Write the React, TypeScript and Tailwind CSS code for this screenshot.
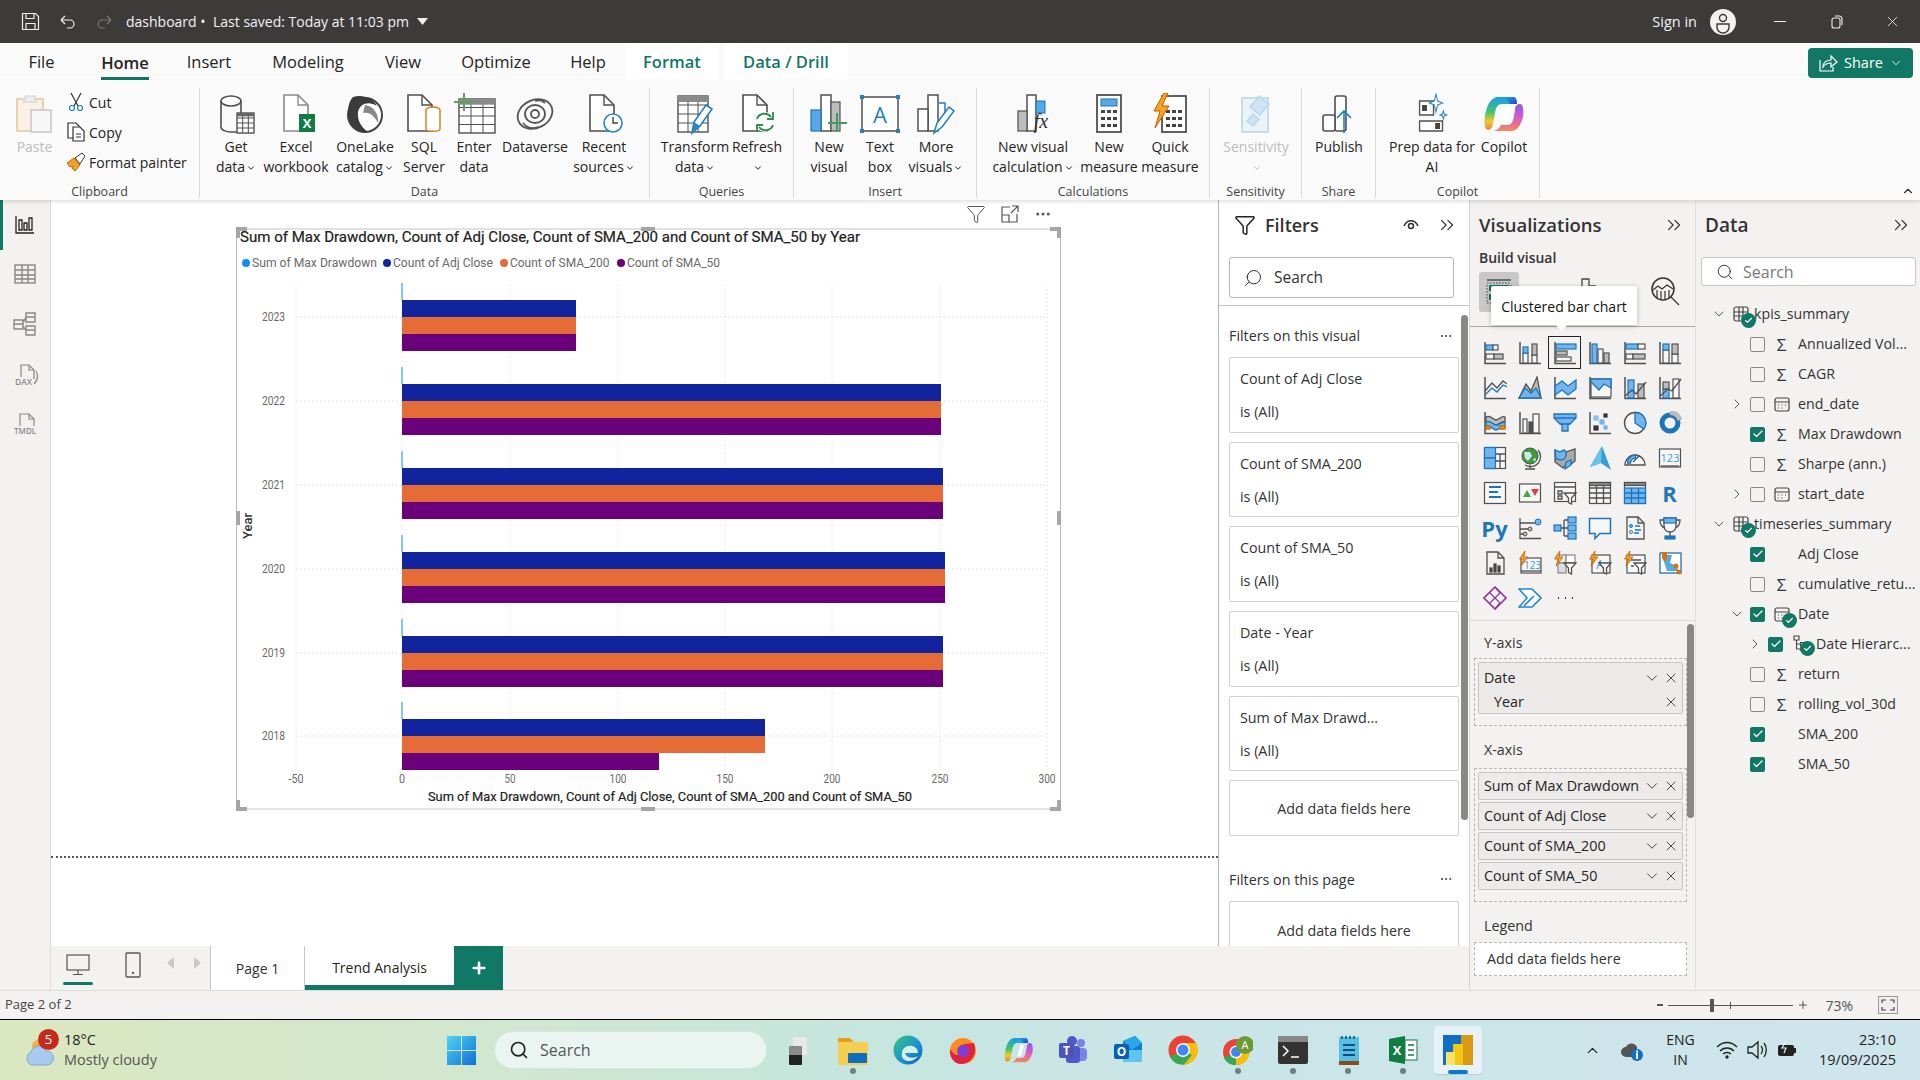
import type { ReactNode } from "react";
import {
  Check,
  ChevronDown,
  ChevronRight,
  ChevronUp,
  ChevronsRight,
  Ellipsis,
  Funnel,
  Plus,
  Search,
  X,
} from "lucide-react";

const D = "#505050";
const L = "#1b75bb";
const F = "#72b4eb";
const G = "#bdbdbd";
const W = "#f7f7f7";

const r = (x: number, y: number, w: number, h: number, f = W, s = D) => (
  <rect x={x} y={y} width={w} height={h} fill={f} stroke={s} strokeWidth="1.2" />
);
const p = (d: string, s = D, f = "none", sw = 1.3) => <path d={d} stroke={s} fill={f} strokeWidth={sw} />;
const ax = p("M2 1v21.5h21", D, "none", 1.5);
const t = (x: number, y: number, size: number, c: string, s: string, weight = 400) => (
  <text x={x} y={y} fontSize={size} fill={c} fontWeight={weight} textAnchor="middle">
    {s}
  </text>
);
const frame = r(1.5, 3, 21, 18, W, D);
const bolt = <path d="M7 0L1.5 8h4L3 15l7-9H6z" fill="#f2a51f" stroke="#c95b00" strokeWidth=".8" />;
const funnel = <path d="M11 12h12l-4.5 5v6l-3-1.5V17z" fill="#fff" stroke={D} strokeWidth="1.3" />;

// visual gallery, row by row. R and Py are plain text cells, see VizCell
const vizIcons: ReactNode[] = [
  <>{ax}{r(3, 4, 7, 5, F, L)}{r(10, 4, 5, 5)}{r(3, 13, 8, 5)}{r(11, 13, 9, 5, G)}</>,
  <>{ax}{r(5, 12, 5, 10)}{r(5, 6, 5, 6, F, L)}{r(14, 14, 5, 8)}{r(14, 3, 5, 11, G)}</>,
  <>{ax}{r(3, 3, 20, 5, F, L)}{r(3, 10, 11, 4, G)}{r(3, 16, 15, 4)}</>,
  <>{ax}{r(4, 3, 5, 19, F, L)}{r(10, 8, 5, 14)}{r(16, 12, 5, 10, G)}</>,
  <>{ax}{r(3, 3, 12, 5, F, L)}{r(15, 3, 7, 5)}{r(3, 13, 7, 5)}{r(10, 13, 12, 5, G)}</>,
  <>{ax}{r(5, 9, 6, 13)}{r(5, 3, 6, 6, F, L)}{r(14, 13, 6, 9)}{r(14, 3, 6, 10, G)}</>,
  <>{ax}{p("M2 15l7-8 5 5 6-7 4 3")}{p("M2 19l7-7 5 4 6-7 4 2", L)}</>,
  <>{p("M1 22l7-14 5 7 6-14 4 21z", D, G)}{p("M1 22l6-10 6 5 5-5 5 10z", L, F)}</>,
  <>{ax}{p("M2 10l7-5 6 5 8-6v9l-8 6-6-5-7 5z", L, F)}</>,
  <>{ax}{r(3, 3, 20, 18, W, D)}{p("M3 3h20v9l-7-4-5 6-8-8z", L, F)}</>,
  <>{ax}{r(5, 4, 6, 18, F, L)}{r(15, 8, 6, 14, G)}{p("M2 20l7-6 4 4 10-12")}</>,
  <>{ax}{r(5, 13, 6, 9, F, L)}{r(5, 6, 6, 7, G)}{r(15, 3, 6, 19)}{p("M2 20l8-7 4 2 9-12")}</>,
  <>{ax}{p("M3 6c5-3 6 3 10 3s5-5 9-3v5c-4-2-5 3-9 3s-5-5-10-3z", D, G)}{p("M3 11c5-3 6 3 10 3s5-4 9-2v4c-4-2-5 3-9 3s-5-6-10-3z", L, F)}{p("M3 15h4v3H3zM17 15h5v3h-5z", "#c96a00", "#f0a030")}</>,
  <>{ax}{r(5, 8, 4, 14)}{r(11, 11, 4, 11, D, D)}{r(15, 3, 6, 19, W)}</>,
  <>{p("M1 3h22v4L17 13h-2v7H9v-7H7L1 7z", L, F)}{p("M1 7h22M7 13h10", L)}</>,
  <>{ax}{r(6, 5, 4, 4, "#8cc0ee", "#8cc0ee")}{r(12, 9, 4, 4, F, F)}{r(6, 15, 4, 4, "#333", "#333")}{r(16, 3, 3, 3, "#333", "#333")}{r(16, 15, 3, 3, F, F)}</>,
  <><circle cx="12" cy="12" r="10.5" fill={W} stroke={D} strokeWidth="1.4" />{p("M12 1.5A10.5 10.5 0 0 1 21 18L12 12z", L, F)}</>,
  <><circle cx="12" cy="12" r="8" fill="none" stroke={L} strokeWidth="5" /><path d="M12 1.5A10.5 10.5 0 0 1 22 9" stroke={G} strokeWidth="5" fill="none" /></>,
  <>{r(1.5, 1.5, 21, 21, W, D)}{r(1.5, 1.5, 11, 10.5, F, L)}{r(1.5, 12, 11, 10.5, F, L)}{p("M12.5 8h10M17 8v14.5M12.5 15h10")}</>,
  <><circle cx="12" cy="10" r="8" fill="#3f9c3a" stroke={D} /><path d="M6 6h6l2 4-4 5-3-3zM15 13l3-1-1 4z" fill="#cfe6f5" /><path d="M20 4a10 10 0 0 1-13 15M12 19v3M7 23h10" stroke={D} fill="none" strokeWidth="1.3" /></>,
  <>{p("M2 4l5 2 4-2 2 2 9-3v12l-5 4-5 1-2 2-8-6z", D, "#a9a9a9")}{p("M2 4l5 2 4-2 2 2v4l-2 3-3 1-5-1z", L, F)}{p("M12 23l1-7 5-2v5z", L, F)}</>,
  <><path d="M14 0L23 24 13 17 2 21z" fill="#2f9fd6" /><path d="M14 0L13 17 2 21z" fill="#69c2ea" /></>,
  <>{p("M2 19a10 10 0 0 1 20 0z", D, W)}{p("M4.5 17a8 8 0 0 1 8-8v3a5 5 0 0 0-5 5z", L, F)}{p("M10 16l6-6", D)}</>,
  <>{frame}{p("M3 20h18", D)}{t(12, 16, 11, "#3a9ad9", "123")}</>,
  <>{r(1.5, 1.5, 21, 21)}{p("M6 6h12M6 11h9M6 16h12", L, "none", 2)}</>,
  <>{frame}<path d="M5 16l4-7 4 7z" fill="#46a546" /><path d="M13 8h8l-4 7z" fill="#e33f3f" /></>,
  <>{r(1.5, 1.5, 21, 19)}{p("M1.5 6h21M5 10h4v3H5zM5 15h4v3H5z")}{funnel}</>,
  <>{r(1.5, 1.5, 21, 21)}{p("M1.5 7h21M1.5 12h21M1.5 17h21M8.5 3v20M15.5 3v20")}{r(1.5, 1.5, 21, 3, "#888")}</>,
  <>{r(1.5, 1.5, 21, 21)}{r(1.5, 7, 21, 15.5, F, L)}{p("M1.5 12h21M1.5 17h21M8.5 7v15M15.5 7v15", L)}{r(1.5, 1.5, 21, 3, "#888")}</>,
  "R",
  "Py",
  <>{p("M2 2v20.5h21M2 7h17M2 13h10M2 18h5M12 13M7 18")}<circle cx="20" cy="6" r="3" fill={F} stroke={L} /><circle cx="12" cy="13" r="2" fill={G} stroke={D} /><circle cx="7" cy="18" r="2" fill={G} stroke={D} /></>,
  <>{r(1, 9, 7, 6, F, L)}{r(15, 1, 8, 6, F, L)}{r(15, 9, 8, 6, F, L)}{r(15, 17, 8, 6, F, L)}{p("M8 12h3M11 4v16M11 4h4M11 12h4M11 20h4")}</>,
  <>{p("M1.5 2.5h21v15H12l-5 5v-5H1.5z", L, W, 1.5)}</>,
  <>{p("M4 1h11l6 6v16H4z")}{p("M15 1v6h6")}<circle cx="8" cy="10" r="1.5" fill={F} stroke={L} /><circle cx="8" cy="16" r="1.5" fill="#fff" stroke={L} />{p("M12 10h5M12 14h6M11 17h5", L)}</>,
  <>{p("M6 2h12v8c0 4-3 6-6 6s-6-2-6-6z", D, W)}{r(6, 2, 12, 5, F, L)}{p("M6 4H2c0 5 2 7 5 8M18 4h4c0 5-2 7-5 8M12 16v4")}{r(7, 20, 10, 3, L, L)}</>,
  <>{p("M4 1h11l6 6v16H4z")}{p("M15 1v6h6")}{r(7, 17, 2, 4, "#444", "#444")}{r(11, 13, 2, 8, "#444", "#444")}{r(15, 15, 2, 6, "#444", "#444")}</>,
  <>{r(3, 7, 20, 15)}{p("M3 20h20")}{t(14.5, 18, 10, "#3a9ad9", "123")}{bolt}</>,
  <>{r(5, 4, 8, 8, "#eee", "#888")}{r(13, 4, 9, 8, "#fff", "#888")}{r(5, 12, 8, 10, "#ddd", "#888")}{bolt}{funnel}</>,
  <>{r(4, 4, 18, 18)}{t(12, 18, 12, "#3a9ad9", "A")}{bolt}{funnel}</>,
  <>{r(4, 4, 18, 18)}{p("M8 9h10M8 15h3")}{bolt}{funnel}</>,
  <>{r(2, 2, 21, 20, "#fff", "#1565a8")}<path d="M4 4h10l-2 8 5 2 3 4v2H9l-2-6z" fill="#5aa8e0" /><path d="M4 1h5v6l-2.5 4L4 7z" fill="#d9730d" /><circle cx="18" cy="15" r="2.5" fill="#d9730d" /><circle cx="21" cy="21" r="2.5" fill="#d9730d" /></>,
  <>{p("M12 1l11 11-11 11L1 12z", "#8a3b9e", "none", 1.6)}{p("M7 7l10 10M17 7L7 17M12 1l5 6M12 23l5-6", "#8a3b9e", "none", 1.2)}</>,
  <>{p("M1 3h13l9 9-9 9H1l8-9z", "#1f86d8", "#fff", 1.6)}{p("M6 20L16 10", "#1f86d8", "none", 1.6)}</>,
  <>{p("M5 12h1M12 12h1M19 12h1", "#333", "none", 2)}</>,
];

const VizCell = ({ n }: { n: number }) => {
  const icon = vizIcons[n];
  if (typeof icon === "string") {
    return <span className="text-[22px] leading-none font-bold text-[#1f78b9]">{icon}</span>;
  }
  return (
    <svg width="24" height="24" viewBox="0 0 24 24" fontFamily="'Open Sans',sans-serif" aria-hidden="true">
      {icon}
    </svg>
  );
};

const grid = (x: number, y: number, w: number, h: number, cols: number, rows: number, head = "#8a8a8a") => {
  const lines = [];
  for (let i = 1; i < cols; i++) lines.push(`M${x + (w * i) / cols} ${y}v${h}`);
  for (let i = 1; i < rows; i++) lines.push(`M${x} ${y + (h * i) / rows}h${w}`);
  return (
    <>
      <rect x={x} y={y} width={w} height={h} fill="#fff" stroke={D} strokeWidth="1.4" />
      <path d={lines.join("")} stroke={D} strokeWidth="1" fill="none" />
      <rect x={x} y={y} width={w} height={h / rows / 1.5} fill={head} />
    </>
  );
};
const doc = (x: number, y: number, w: number, h: number, s = D) => (
  <>
    <path d={`M${x} ${y}h${w - 10}l10 10v${h - 10}h-${w}z`} fill="#fff" stroke={s} strokeWidth="1.6" />
    <path d={`M${x + w - 10} ${y}v10h10`} fill="none" stroke={s} strokeWidth="1.4" />
  </>
);
const Rb = ({ children }: { children: ReactNode }) => (
  <svg width="44" height="42" viewBox="0 0 44 42" fontFamily="'Open Sans',sans-serif" aria-hidden="true">
    {children}
  </svg>
);

const ribbonIcons: Record<string, ReactNode> = {
  paste: (
    <>
      <rect x="4" y="6" width="26" height="32" fill="#fbf1e4" stroke="#e6c89f" strokeWidth="1.6" />
      <path d="M12 6V3h10v3l2 3H10z" fill="#eee" stroke="#cfcfcf" />
      <rect x="18" y="17" width="20" height="22" fill="#f7f7f7" stroke="#c9c9c9" strokeWidth="1.6" />
    </>
  ),
  get: (
    <>
      <ellipse cx="17" cy="8" rx="10" ry="5" fill="#fff" stroke={D} strokeWidth="1.6" />
      <path d="M7 8v26c0 3 5 5 10 5h6M27 8v12" fill="none" stroke={D} strokeWidth="1.6" />
      {grid(23, 20, 17, 20, 3, 4, "#666")}
    </>
  ),
  excel: (
    <>
      {doc(10, 2, 24, 36, "#8a8a8a")}
      <rect x="25" y="21" width="16" height="18" fill="#107c41" />
      <text x="33" y="35" fontSize="13" fontWeight="700" fill="#fff" textAnchor="middle">X</text>
    </>
  ),
  onelake: (
    <>
      <circle cx="22" cy="22" r="17" fill="#fff" stroke="#444" strokeWidth="2" />
      <path d="M10 4c8-3 20 0 24 9-8-5-17-3-19 6-1 8 3 15 10 20C14 40 5 32 5 22 5 14 6 8 10 4z" fill="#3b3b3b" />
      <path d="M22 12c8 1 14 8 13 18-4-8-9-11-15-10z" fill="#888" />
    </>
  ),
  sql: (
    <>
      {doc(6, 2, 24, 36)}
      <ellipse cx="31" cy="17" rx="7" ry="3" fill="#fff" stroke="#d97a1a" strokeWidth="1.4" />
      <path d="M24 17v19c0 3 14 3 14 0V17" fill="#fff" stroke="#d97a1a" strokeWidth="1.4" />
    </>
  ),
  enter: (
    <>
      {grid(7, 6, 36, 34, 3, 4)}
      <path d="M12 0v18M2 9h20" stroke="#5aa05a" strokeWidth="2" />
    </>
  ),
  dataverse: (
    <g fill="none" stroke="#555" strokeWidth="1.8">
      <ellipse cx="22" cy="21" rx="18" ry="14" transform="rotate(-25 22 21)" />
      <ellipse cx="22" cy="21" rx="10" ry="9" />
      <circle cx="22" cy="21" r="4" />
      <path d="M10 30c4 5 10 6 15 4M32 10c-3-3-7-3-10-2" />
    </g>
  ),
  recent: (
    <>
      {doc(8, 2, 24, 36)}
      <circle cx="31" cy="30" r="9" fill="#fff" stroke="#2a87c8" strokeWidth="1.6" />
      <path d="M31 24v6h5" fill="none" stroke="#444" strokeWidth="1.4" />
    </>
  ),
  transform: (
    <>
      {grid(5, 3, 30, 36, 3, 4)}
      <path d="M19 40l2-11 12-17 6 4-12 17z" fill="#fff" stroke="#1f7fc2" strokeWidth="1.6" />
      <path d="M19 40l2-11 6 4z" fill="#2a87c8" />
    </>
  ),
  refresh: (
    <>
      {doc(8, 2, 24, 36)}
      <circle cx="30" cy="29" r="10" fill="#fff" />
      <path d="M22 26a8 8 0 0 1 14-2M38 32a8 8 0 0 1-14 2" fill="none" stroke="#2a8f4c" strokeWidth="2" />
      <path d="M38 19v7h-6M22 39v-7h6" fill="none" stroke="#2a8f4c" strokeWidth="1.8" />
    </>
  ),
  newVisual: (
    <>
      <rect x="14" y="2" width="10" height="36" fill="#fff" stroke={D} strokeWidth="1.5" />
      <rect x="24" y="9" width="9" height="29" fill="#bdbdbd" stroke={D} strokeWidth="1.2" />
      <rect x="4" y="17" width="10" height="21" fill="#5aa7e6" stroke="#1b75bb" strokeWidth="1.2" />
      <path d="M30 20v19M21 30h19" stroke="#3f9c5a" strokeWidth="2" />
    </>
  ),
  textBox: (
    <>
      <rect x="4" y="4" width="36" height="34" fill="#fff" stroke={D} strokeWidth="1.5" />
      {[[4, 4], [40, 4], [4, 38], [40, 38]].map(([x, y]) => (
        <rect key={`${x}${y}`} x={x - 2} y={y - 2} width="4" height="4" fill="#1f7fc2" />
      ))}
      <text x="22" y="30" fontSize="22" fill="#1f7fc2" textAnchor="middle">A</text>
    </>
  ),
  moreVisuals: (
    <>
      <rect x="14" y="2" width="10" height="36" fill="#fff" stroke={D} strokeWidth="1.5" />
      <rect x="4" y="16" width="10" height="22" fill="#fff" stroke={D} strokeWidth="1.5" />
      <path d="M24 10h7v10M20 40l3-10 12-16 5 4-12 16z" fill="#fff" stroke="#1f7fc2" strokeWidth="1.5" />
    </>
  ),
  newCalc: (
    <>
      <rect x="16" y="2" width="9" height="36" fill="#fff" stroke={D} strokeWidth="1.5" />
      <rect x="7" y="18" width="9" height="20" fill="#bdbdbd" stroke={D} strokeWidth="1.2" />
      <rect x="25" y="8" width="9" height="12" fill="#5aa7e6" stroke="#1b75bb" />
      <text x="30" y="35" fontSize="20" fontFamily="'Liberation Serif',serif" fontStyle="italic" fill="#333" textAnchor="middle">fx</text>
    </>
  ),
  newMeasure: (
    <>
      <rect x="10" y="2" width="24" height="37" fill="#fff" stroke={D} strokeWidth="1.8" />
      <rect x="14" y="6" width="16" height="7" fill="#5aa7e6" stroke="#1b75bb" />
      {[17, 24, 31].map((y) => (
        <path key={y} d={`M14 ${y}h4v3h-4zM20 ${y}h4v3h-4zM26 ${y}h4v3h-4z`} fill="#444" />
      ))}
    </>
  ),
  quick: (
    <>
      <rect x="14" y="3" width="24" height="36" fill="#fff" stroke={D} strokeWidth="1.8" />
      {[17, 24, 31].map((y) => (
        <path key={y} d={`M18 ${y}h4v3h-4zM24 ${y}h4v3h-4zM30 ${y}h4v3h-4z`} fill="#444" />
      ))}
      <path d="M16 0L6 18h6l-5 17 14-22h-7l6-13z" fill="#f2a51f" stroke="#c95b00" />
    </>
  ),
  sensitivity: (
    <g stroke="#bcd6e8" fill="#eaf3fa" strokeWidth="1.6">
      <rect x="8" y="5" width="26" height="34" />
      <path d="M16 14l9-11 10 8-9 11zM13 28l6-7 6 5-6 7z" fill="#cfe3f2" />
    </g>
  ),
  publish: (
    <>
      <rect x="18" y="3" width="11" height="35" rx="2" fill="#fff" stroke={D} strokeWidth="1.6" />
      <rect x="6" y="22" width="12" height="16" rx="2" fill="#fff" stroke={D} strokeWidth="1.6" />
      <path d="M27 40V18M20 25l7-7 7 7" fill="none" stroke="#1f7fc2" strokeWidth="1.6" />
    </>
  ),
  prep: (
    <g transform="translate(3 0) scale(.82 1)">
      <path d="M8 8h17v14H8zM8 28h28v10H8z" fill="#fff" stroke={D} strokeWidth="1.6" />
      <rect x="11" y="12" width="6" height="6" fill="#444" />
      <rect x="27" y="30" width="6" height="6" fill="#444" />
      <path d="M28 1l2 7 6 2-6 2-2 7-2-7-6-2 6-2zM37 18l1 3 3 1-3 1-1 3-1-3-3-1 3-1z" fill="#fff" stroke="#2a87c8" strokeWidth="1.2" />
    </g>
  ),
  copilot: (
    <>
      <defs>
        <linearGradient id="cp1" x1="0" y1="0" x2="0" y2="1">
          <stop offset="0" stopColor="#1b9df0" />
          <stop offset=".45" stopColor="#3ec46d" />
          <stop offset=".75" stopColor="#f4c832" />
          <stop offset="1" stopColor="#f2803a" />
        </linearGradient>
        <linearGradient id="cp2" x1="0" y1="0" x2="0" y2="1">
          <stop offset="0" stopColor="#8a5be8" />
          <stop offset=".5" stopColor="#d75ac8" />
          <stop offset="1" stopColor="#f58a5a" />
        </linearGradient>
        <linearGradient id="cp3" x1="0" y1="0" x2="1" y2="1">
          <stop offset="0" stopColor="#26a6f0" />
          <stop offset="1" stopColor="#2347c8" />
        </linearGradient>
      </defs>
      <path d="M15 4h17c2 0 3 3 2 7H20c-4 0-6 3-7 9L11 31c-1 5-4 7-7 5-2-4-2-11 0-18C6 10 10 5 15 4z" fill="url(#cp1)" />
      <path d="M20 4h11c2 0 4 2 4 7h-7c-2-5-5-6-8-7z" fill="url(#cp3)" />
      <path d="M38 11c3 0 4 6 3 13-2 8-6 14-12 14H12c2-1 5-2 7-6h7c3 0 5-3 6-9l1-6c0-4 2-6 5-6z" fill="url(#cp2)" />
      <path d="M24 14h5l-4 15h-5z" fill="#fff" />
    </>
  ),
};

type RibbonItem = { icon: string; l1: string; l2?: string; w: number; chev?: boolean; off?: boolean };

const Chev = () => <ChevronDown className="inline-block ml-px" size={10} strokeWidth={2.4} />;

function RibbonBtn({ item }: { item: RibbonItem }) {
  return (
    <div
      className={`flex flex-col items-center shrink-0 whitespace-nowrap ${item.off ? "text-[#bdbdbd]" : "text-[#252423]"}`}
      style={{ width: item.w }}
    >
      <div className="h-[42px] mt-[5px] mb-[2px]">
        <Rb>{ribbonIcons[item.icon]}</Rb>
      </div>
      <span className="leading-5">{item.l1}</span>
      <span className="leading-5">
        {item.l2}
        {item.chev && <Chev />}
      </span>
    </div>
  );
}

function Group({ label, w, items, pl = 0 }: { label: string; w: number; items: RibbonItem[]; pl?: number }) {
  return (
    <div className="flex flex-col h-[110px] mt-2 border-r border-[#d9d9d9] shrink-0" style={{ width: w }}>
      <div className="flex flex-1" style={{ paddingLeft: pl }}>
        {items.map((i) => (
          <RibbonBtn key={i.icon} item={i} />
        ))}
      </div>
      <div className="text-center text-[12.5px] leading-[14px] text-[#444] mb-[-1px]">{label}</div>
    </div>
  );
}

const tabs = [
  { n: "File", w: 83 },
  { n: "Home", w: 84 },
  { n: "Insert", w: 84 },
  { n: "Modeling", w: 114 },
  { n: "View", w: 76 },
  { n: "Optimize", w: 110 },
  { n: "Help", w: 74 },
];

function TitleBar() {
  return (
    <div className="flex items-center h-[43px] bg-[#3c3b39] text-[#f3f2f1] text-[14px]">
      <svg className="ml-[21px]" width="19" height="19" viewBox="0 0 19 19" fill="none" stroke="#eee" strokeWidth="1.2" aria-hidden="true">
        <path d="M1.5 1.5h13l3 3v13h-16z" />
        <path d="M5 1.5v5h8v-5M5 17.5v-6h9v6" />
      </svg>
      <svg className="ml-[19px]" width="18" height="18" viewBox="0 0 18 18" fill="none" stroke="#eee" strokeWidth="1.2" aria-hidden="true">
        <path d="M2 7h9a4 4 0 0 1 0 8H8M2 7l4-4M2 7l4 4" />
      </svg>
      <svg className="ml-[18px]" width="18" height="18" viewBox="0 0 18 18" fill="none" stroke="#777" strokeWidth="1.2" aria-hidden="true">
        <path d="M16 7H7a4 4 0 0 0 0 8h3M16 7l-4-4M16 7l-4 4" />
      </svg>
      <span className="ml-[13px] w-[87px] whitespace-nowrap">dashboard&nbsp;•</span>
      <span className="whitespace-nowrap">Last saved: Today at 11:03 pm</span>
      <svg className="ml-[8px]" width="11" height="7" viewBox="0 0 11 7" aria-hidden="true">
        <path d="M0 0h11L5.5 7z" fill="#eee" />
      </svg>
      <span className="ml-auto text-[14.5px]">Sign in</span>
      <svg className="ml-[13px]" width="26" height="26" viewBox="0 0 26 26" aria-hidden="true">
        <circle cx="13" cy="13" r="13" fill="#f3f2f1" />
        <circle cx="13" cy="9" r="3.5" fill="none" stroke="#3c3b39" strokeWidth="1.4" />
        <path d="M7 15h12v3a6 6 0 0 1-12 0z" fill="none" stroke="#3c3b39" strokeWidth="1.4" />
      </svg>
      <div className="ml-[38px] w-[12px] h-[1.5px] bg-[#eee]" />
      <svg className="ml-[45px]" width="12" height="14" viewBox="0 0 12 14" fill="none" stroke="#eee" strokeWidth="1.1" aria-hidden="true">
        <rect x="1" y="3" width="8" height="10" rx="2" />
        <path d="M4 1h4a3 3 0 0 1 3 3v6" />
      </svg>
      <X className="ml-[41px] mr-[19px]" size={17} strokeWidth={1.2} color="#eee" />
    </div>
  );
}

function TabRow() {
  return (
    <div className="flex h-[37px] bg-[#fafafa] text-[16.5px] text-[#252423] relative">
      {tabs.map((tb) => (
        <div key={tb.n} className="flex justify-center items-center pt-px" style={{ width: tb.w }}>
          <span className={tb.n === "Home" ? "font-semibold border-b-[3px] border-[#117865] h-[36px] leading-[38px] whitespace-nowrap flex justify-center w-12" : ""}>{tb.n}</span>
        </div>
      ))}
      <div className="w-[94px] bg-white flex items-center justify-center pt-px font-semibold text-[#117865]">Format</div>
      <div className="ml-[5px] w-[124px] bg-white flex items-center justify-center pt-px font-semibold text-[#117865]">Data / Drill</div>
      <div className="ml-auto mr-[7px] mt-[5px] w-[105px] h-[30px] rounded-[4px] bg-[#117865] text-white text-[14.5px] flex items-center justify-center gap-[6px]">
        <svg width="20" height="20" viewBox="0 0 20 20" fill="none" stroke="#fff" strokeWidth="1.2" aria-hidden="true">
          <path d="M2 7v11h13v-4" />
          <path d="M5 14c0-5 4-7 8-7V3l6 6-6 5v-4c-4 0-6 1-8 4z" />
        </svg>
        Share
        <ChevronDown size={14} strokeWidth={1.5} />
      </div>
    </div>
  );
}

function Ribbon() {
  return (
    <div className="relative z-10 flex h-[120px] bg-[#fafafa] text-[14px] shadow-[0_2px_4px_rgba(0,0,0,0.12)]">
      <div className="flex flex-col h-[110px] mt-2 border-r border-[#d9d9d9] w-[200px] shrink-0">
        <div className="flex flex-1">
          <div className="w-[69px] flex flex-col items-center text-[#bdbdbd]">
            <div className="h-[42px] mt-[5px] mb-[2px]">
              <Rb>{ribbonIcons.paste}</Rb>
            </div>
            <span className="leading-5">Paste</span>
          </div>
          <div className="text-[#252423] -ml-[4px] -mt-px">
            {["Cut", "Copy", "Format painter"].map((s, i) => (
              <div key={s} className="flex items-center h-[30px] whitespace-nowrap">
                <div className="w-[22px] flex justify-center">
                  {i === 0 && (
                    <svg width="16" height="20" viewBox="0 0 16 20" fill="none" stroke="#333" strokeWidth="1.2" aria-hidden="true">
                      <path d="M3 1l7 13M13 1L6 14" />
                      <circle cx="4" cy="16" r="2.5" stroke="#1f7fc2" />
                      <circle cx="12" cy="16" r="2.5" stroke="#1f7fc2" />
                    </svg>
                  )}
                  {i === 1 && (
                    <svg width="18" height="20" viewBox="0 0 18 20" fill="#fff" stroke="#333" strokeWidth="1.2" aria-hidden="true">
                      <path d="M1 1h8l3 3v12H1z" />
                      <path d="M6 5h7l4 4v10H6zM9 12h5M9 15h5" />
                    </svg>
                  )}
                  {i === 2 && (
                    <svg width="20" height="20" viewBox="0 0 20 20" aria-hidden="true">
                      <path d="M1 11l7-5 6 7-5 6-3-3 1-2-3 1z" fill="#f0a030" stroke="#c96a00" />
                      <path d="M9 6l7-5 3 3-5 8z" fill="#fff" stroke="#333" />
                    </svg>
                  )}
                </div>
                <span className="ml-[2px]">{s}</span>
              </div>
            ))}
          </div>
        </div>
        <div className="text-center text-[12.5px] leading-[14px] text-[#444] mb-[-1px]">Clipboard</div>
      </div>
      <Group
        label="Data"
        w={450}
        pl={5}
        items={[
          { icon: "get", l1: "Get", l2: "data", w: 62, chev: true },
          { icon: "excel", l1: "Excel", l2: "workbook", w: 58 },
          { icon: "onelake", l1: "OneLake", l2: "catalog", w: 80, chev: true },
          { icon: "sql", l1: "SQL", l2: "Server", w: 38 },
          { icon: "enter", l1: "Enter", l2: "data", w: 62 },
          { icon: "dataverse", l1: "Dataverse", w: 60 },
          { icon: "recent", l1: "Recent", l2: "sources", w: 78, chev: true },
        ]}
      />
      <Group
        label="Queries"
        w={144}
        items={[
          { icon: "transform", l1: "Transform", l2: "data", w: 90, chev: true },
          { icon: "refresh", l1: "Refresh", w: 34, chev: true },
        ]}
      />
      <Group
        label="Insert"
        w={183}
        pl={5}
        items={[
          { icon: "newVisual", l1: "New", l2: "visual", w: 60 },
          { icon: "textBox", l1: "Text", l2: "box", w: 42 },
          { icon: "moreVisuals", l1: "More", l2: "visuals", w: 70, chev: true },
        ]}
      />
      <Group
        label="Calculations"
        w={233}
        pl={4}
        items={[
          { icon: "newCalc", l1: "New visual", l2: "calculation", w: 104, chev: true },
          { icon: "newMeasure", l1: "New", l2: "measure", w: 48 },
          { icon: "quick", l1: "Quick", l2: "measure", w: 74 },
        ]}
      />
      <Group label="Sensitivity" w={92} items={[{ icon: "sensitivity", l1: "Sensitivity", w: 92, chev: true, off: true }]} />
      <Group label="Share" w={74} items={[{ icon: "publish", l1: "Publish", w: 74 }]} />
      <Group
        label="Copilot"
        w={164}
        pl={18}
        items={[
          { icon: "prep", l1: "Prep data for", l2: "AI", w: 76 },
          { icon: "copilot", l1: "Copilot", w: 68 },
        ]}
      />
      <ChevronUp className="absolute right-[5px] bottom-[2px] text-[#333]" size={14} strokeWidth={2} />
    </div>
  );
}

function LeftRail() {
  return (
    <div className="w-[51px] shrink-0 border-r border-[#dcdcdc] bg-[#f3f2f1] flex flex-col items-center relative">
      <div className="absolute left-0 top-0 w-[3px] h-[50px] bg-[#117865]" />
      <svg className="mt-[15px]" width="20" height="20" viewBox="0 0 20 20" fill="none" stroke="#222" strokeWidth="1.3" aria-hidden="true">
        <path d="M1 1v17h18M4 5h3v10H4zM9 8h3v7H9zM14 3h3v12h-3z" />
      </svg>
      <svg className="mt-[28px]" width="22" height="22" viewBox="0 0 22 22" fill="none" stroke="#888" strokeWidth="1.4" aria-hidden="true">
        <rect x="1" y="2" width="20" height="18" />
        <path d="M1 7h20M1 12h20M1 16h20M8 2v18M14 2v18" />
      </svg>
      <svg className="mt-[27px]" width="24" height="24" viewBox="0 0 24 24" fill="none" stroke="#888" strokeWidth="1.4" aria-hidden="true">
        <path d="M1 8h9v9H1zM1 12h9M13 1h9v9h-9zM13 5h9M13 14h9v9h-9zM13 18h9M10 11l3-6M10 14l3 5" />
      </svg>
      <svg className="mt-[27px] ml-[3px]" width="24" height="24" viewBox="0 0 24 24" fontFamily="'Open Sans',sans-serif" aria-hidden="true">
        <path d="M6 14V2h8l5 5v9" fill="none" stroke="#888" strokeWidth="1.2" />
        <path d="M14 2v5h5M21 8c2 4 2 9-2 13" fill="none" stroke="#888" strokeWidth="1.2" />
        <text x="0" y="22" fontSize="8.5" fontWeight="600" fill="#888">DAX</text>
      </svg>
      <svg className="mt-[25px] ml-[3px]" width="26" height="24" viewBox="0 0 26 24" fontFamily="'Open Sans',sans-serif" aria-hidden="true">
        <path d="M6 14V2h9l5 5v7" fill="none" stroke="#888" strokeWidth="1.2" />
        <path d="M15 2v5h5" fill="none" stroke="#888" strokeWidth="1.2" />
        <text x="0" y="22" fontSize="8" fontWeight="600" fill="#888">TMDL</text>
      </svg>
    </div>
  );
}

const years = [
  { y: "2023", c: 317, a: 174, b: 174, e: 174 },
  { y: "2022", c: 401, a: 539, b: 539, e: 539 },
  { y: "2021", c: 485, a: 541, b: 541, e: 541 },
  { y: "2020", c: 569, a: 543, b: 543, e: 543 },
  { y: "2019", c: 653, a: 541, b: 541, e: 541 },
  { y: "2018", c: 736, a: 363, b: 363, e: 257 },
];
const ticks = [
  { l: "-50", x: 296, w: 15 },
  { l: "0", x: 402, w: 6 },
  { l: "50", x: 510, w: 11 },
  { l: "100", x: 618, w: 17 },
  { l: "150", x: 725, w: 17 },
  { l: "200", x: 832, w: 17 },
  { l: "250", x: 940, w: 17 },
  { l: "300", x: 1047, w: 17 },
];
const legend = [
  { c: "#118dff", t: "Sum of Max Drawdown", x: 246, w: 125 },
  { c: "#12239e", t: "Count of Adj Close", x: 387, w: 100 },
  { c: "#e66c37", t: "Count of SMA_200", x: 504, w: 99.5 },
  { c: "#6b007b", t: "Count of SMA_50", x: 621, w: 93 },
];

function Chart() {
  return (
    <svg width="825" height="582" viewBox="236 228 825 582" fontFamily="Roboto,sans-serif" className="block">
      <text x="240" y="242" fontSize="14" fill="#222" stroke="#222" strokeWidth=".2" textLength="620" lengthAdjust="spacingAndGlyphs">
        Sum of Max Drawdown, Count of Adj Close, Count of SMA_200 and Count of SMA_50 by Year
      </text>
      {legend.map((l) => (
        <g key={l.t}>
          <circle cx={l.x} cy={263} r={4} fill={l.c} />
          <text x={l.x + 6} y={267} fontSize="12" fill="#6a6a6a" textLength={l.w} lengthAdjust="spacingAndGlyphs">
            {l.t}
          </text>
        </g>
      ))}
      {ticks.map((k) => (
        <g key={k.l}>
          <path d={`M${k.x} 285V772`} stroke="#d4d4d4" strokeDasharray="1 3" />
          <text x={k.x} y={783} fontSize="12" fill="#6a6a6a" textAnchor="middle" textLength={k.w} lengthAdjust="spacingAndGlyphs">
            {k.l}
          </text>
        </g>
      ))}
      {years.map((d) => (
        <g key={d.y}>
          <path d={`M296 ${d.c}H1047`} stroke="#d4d4d4" strokeDasharray="1 3" />
          <text x={285} y={d.c + 4} fontSize="12" fill="#6a6a6a" textAnchor="end" textLength="23" lengthAdjust="spacingAndGlyphs">
            {d.y}
          </text>
          <rect x={401.5} y={d.c - 34} width={1} height={17} fill="#118dff" />
          <rect x={402} y={d.c - 17} width={d.a} height={17} fill="#12239e" />
          <rect x={402} y={d.c} width={d.b} height={17} fill="#e66c37" />
          <rect x={402} y={d.c + 17} width={d.e} height={17} fill="#6b007b" />
        </g>
      ))}
      <text x="670" y="801" fontSize="13" fill="#222" stroke="#222" strokeWidth=".2" textAnchor="middle" textLength="484" lengthAdjust="spacingAndGlyphs">
        Sum of Max Drawdown, Count of Adj Close, Count of SMA_200 and Count of SMA_50
      </text>
      <text x="252" y="526" fontSize="13" fontWeight="500" fill="#333" textAnchor="middle" transform="rotate(-90 252 526)">
        Year
      </text>
    </svg>
  );
}

const Handle = ({ className }: { className: string }) => <span className={`absolute border-[#a6a6a6] ${className}`} />;

function Canvas() {
  return (
    <div className="w-[1167px] shrink-0 bg-white flex flex-col">
      <div className="h-[656px] pl-[185px]">
        <div className="w-[825px] h-[28px] flex items-center justify-end gap-[15px] pr-[9px] text-[#555]">
          <Funnel size={20} strokeWidth={1.2} />
          <svg width="18" height="18" viewBox="0 0 18 18" fill="none" stroke="#555" strokeWidth="1.2" aria-hidden="true">
            <path d="M16 9v8H1V2h8M1 10h7v7M11 1h6v6M17 1l-7 7" />
          </svg>
          <Ellipsis size={18} strokeWidth={2} />
        </div>
        <div className="relative w-[825px] h-[582px] border-x border-[#bdbdbd]">
          <div className="absolute inset-x-0 top-0 h-[2px] bg-[#e2e2e2]" />
          <div className="absolute inset-x-0 bottom-0 h-[2px] bg-[#e2e2e2]" />
          <div className="-ml-px">
            <Chart />
          </div>
          <Handle className="-left-px -top-px w-[11px] h-[11px] border-t-[4px] border-l-[4px]" />
          <Handle className="-right-px -top-px w-[11px] h-[11px] border-t-[4px] border-r-[4px]" />
          <Handle className="-left-px -bottom-px w-[11px] h-[11px] border-b-[4px] border-l-[4px]" />
          <Handle className="-right-px -bottom-px w-[11px] h-[11px] border-b-[4px] border-r-[4px]" />
          <Handle className="left-[404px] -top-px w-[14px] h-[4px] bg-[#a6a6a6]" />
          <Handle className="left-[404px] -bottom-px w-[14px] h-[4px] bg-[#a6a6a6]" />
          <Handle className="-left-px top-[283px] w-[4px] h-[14px] bg-[#a6a6a6]" />
          <Handle className="-right-px top-[283px] w-[4px] h-[14px] bg-[#a6a6a6]" />
        </div>
      </div>
      <div className="border-t-2 border-dotted border-[#555]" />
    </div>
  );
}

const filterCards = ["Count of Adj Close", "Count of SMA_200", "Count of SMA_50", "Date - Year", "Sum of Max Drawd..."];

function FiltersPane() {
  return (
    <div className="relative w-[251px] shrink-0 h-[746px] border-l border-[#b5b5b5] bg-white text-[14.3px] text-[#333]">
      <div className="flex items-center h-[50px] pl-[15px] pr-[11px]">
        <Funnel size={22} strokeWidth={1.6} color="#222" />
        <span className="ml-[9px] text-[18px] font-semibold">Filters</span>
        <svg className="ml-auto" width="16" height="12" viewBox="0 0 16 12" fill="none" stroke="#333" strokeWidth="1.5" aria-hidden="true">
          <path d="M1 7c3-7 11-7 14 0" />
          <circle cx="8" cy="7" r="2.5" />
        </svg>
        <ChevronsRight className="ml-[17px]" size={22} strokeWidth={1.3} />
      </div>
      <div className="ml-[10px] mt-[7px] w-[225px] h-[41px] border border-[#b5b5b5] rounded-[3px] flex items-center pl-[13px] gap-[11px] pt-px">
        <Search className="-scale-x-100" size={20} strokeWidth={1.2} />
        <span className="text-[15.5px]">Search</span>
      </div>
      <div className="mt-[7px] border-t border-[#c4c4c4]" />
      <div className="flex items-center justify-between ml-[10px] pr-[16px] mt-[20px] h-[20px]">
        <span>Filters on this visual</span>
        <Ellipsis size={14} strokeWidth={1.5} />
      </div>
      <div className="ml-[10px] mt-[11px] w-[230px]">
        {filterCards.map((c) => (
          <div key={c} className="h-[75.7px] mb-[9px] border border-[#d2d2d2] rounded-[2px] pl-[10px] pt-[11px]">
            <div className="leading-5">{c}</div>
            <div className="leading-5 mt-[13px]">is (All)</div>
          </div>
        ))}
        <div className="h-[56px] border border-[#d2d2d2] rounded-[2px] flex items-center justify-center">Add data fields here</div>
      </div>
      <div className="flex items-center justify-between ml-[10px] pr-[16px] mt-[33px] h-[20px]">
        <span>Filters on this page</span>
        <Ellipsis size={14} strokeWidth={1.5} />
      </div>
      <div className="ml-[10px] mt-[12px] w-[230px] h-[45px] border-x border-t border-[#d2d2d2] rounded-t-[2px] flex items-center justify-center pt-[12px]">Add data fields here</div>
      <div className="absolute right-[1px] top-[115px] w-[7px] h-[505px] rounded-[4px] bg-[#8a8886]" />
    </div>
  );
}

function PageTabs() {
  return (
    <div className="flex h-[44px] bg-[#f3f2f1]">
      <div className="w-[54px] flex flex-col items-center">
        <svg className="mt-[8px]" width="24" height="22" viewBox="0 0 24 22" fill="none" stroke="#555" strokeWidth="1.2" aria-hidden="true">
          <rect x="1" y="1" width="22" height="15" />
          <path d="M12 16v4M7 20.5h10" />
        </svg>
        <div className="mt-[6px] w-[30px] h-[3px] rounded-full bg-[#117865]" />
      </div>
      <svg className="ml-[20px] mt-[6px]" width="16" height="26" viewBox="0 0 16 26" fill="none" stroke="#555" strokeWidth="1.3" aria-hidden="true">
        <rect x="1" y="1" width="14" height="24" rx="1" />
        <circle cx="8" cy="21" r=".5" fill="#555" />
      </svg>
      <div className="ml-[26px] mt-[11px] flex gap-[20px] h-[12px]">
        <svg width="7" height="12" viewBox="0 0 7 12" aria-hidden="true"><path d="M7 0v12L0 6z" fill="#c8c8c8" /></svg>
        <svg width="7" height="12" viewBox="0 0 7 12" aria-hidden="true"><path d="M0 0v12l7-6z" fill="#c8c8c8" /></svg>
      </div>
      <div className="ml-[9px] w-[95px] bg-white border-x border-[#c8c8c8] flex items-center justify-center text-[14px] text-[#333]">Page 1</div>
      <div className="w-[149px] bg-white border-b-[5px] border-[#117865] flex items-center justify-center pt-[4px] text-[14px] font-medium text-[#252423]">Trend Analysis</div>
      <div className="w-[49px] bg-[#117865] flex items-center justify-center text-white">
        <Plus size={18} strokeWidth={3.5} />
      </div>
    </div>
  );
}

function Chip({ label, h = 28 }: { label: string; h?: number }) {
  return (
    <div className="flex items-center bg-[#edebe9] border border-[#c8c6c4] rounded-[2px] pl-[5px] pr-[3px] text-[#252423] whitespace-nowrap" style={{ height: h }}>
      <span>{label}</span>
      <ChevronDown className="ml-auto" size={18} strokeWidth={1.1} />
      <X className="ml-[2px]" size={16} strokeWidth={1.2} />
    </div>
  );
}

function VizPane() {
  return (
    <div className="relative w-[226px] shrink-0 border-l border-[#d6d6d6] bg-[#f3f2f1] text-[14.3px] text-[#333]">
      <div className="flex items-center h-[50px] pl-[9px] pr-[10px]">
        <span className="text-[18.5px] font-semibold">Visualizations</span>
        <ChevronsRight className="ml-auto" size={22} strokeWidth={1.3} />
      </div>
      <div className="h-[16px] leading-4 pl-[9px] font-semibold text-[14px]">Build visual</div>
      <div className="relative h-[61px] border-b border-[#a8a8a8] flex">
        <div className="ml-[9px] mt-[6px] w-[40px] h-[40px] rounded-[3px] bg-[#c8c8c8] flex items-center justify-center">
          <svg width="30" height="30" viewBox="0 0 30 30" aria-hidden="true">
            <path d="M3 3h24" stroke="#333" strokeWidth="1.2" />
            <path d="M3 6h24M3 8v18M27 8v18M3 26h24" stroke="#444" strokeDasharray="1.5 1.5" />
            <rect x="5" y="8" width="20" height="6" fill="#117865" />
            <rect x="5" y="17" width="12" height="6" fill="#117865" />
          </svg>
        </div>
        <svg className="absolute left-[106px] top-[12px]" width="20" height="14" viewBox="0 0 20 14" fill="none" stroke="#444" strokeWidth="1.3" aria-hidden="true">
          <path d="M6 14V1h7v7h6v6" />
        </svg>
        <svg className="absolute left-[180px] top-[10px]" width="30" height="30" viewBox="0 0 30 30" fill="none" stroke="#333" strokeWidth="1.5" aria-hidden="true">
          <circle cx="13" cy="13" r="11" />
          <path d="M21 21l8 8M3 14l5-4 4 3 5-4 6 4M7 14v8M11 15v9M15 15v9M19 14v8" strokeWidth="1.2" />
        </svg>
        <div className="absolute left-[21px] top-[20px] w-[146px] h-[39px] bg-white rounded-[2px] shadow-[0_1px_5px_rgba(0,0,0,0.25)] flex items-center justify-center pt-px text-[14px] text-[#111] z-10 whitespace-nowrap">
          Clustered bar chart
          <span className="absolute left-[66px] -bottom-[4px] w-[9px] h-[9px] rotate-45 bg-white" />
        </div>
      </div>
      <div className="grid grid-cols-[repeat(6,35px)] auto-rows-[35px] pl-[7px] pt-[8px] h-[293px]">
        {vizIcons.map((_, i) => (
          <div key={i} className={`flex items-center justify-center ${i === 2 ? "outline-[1.5px] outline-[#222] -outline-offset-[2px]" : ""}`}>
            <VizCell n={i} />
          </div>
        ))}
      </div>
      <div className="border-t border-[#dedcda]" />
      <div className="pl-[4px] pr-[8px]">
        <div className="leading-5 pl-[10px] mt-[12px] mb-[5px]">Y-axis</div>
        <div className="h-[68px] border border-dashed border-[#b5b5b5] p-[3px]">
          <div className="h-[52px] bg-[#edebe9] border border-[#c8c6c4] rounded-[2px] pl-[5px] pr-[3px] pt-[2px] text-[#252423]">
            <div className="flex items-center h-[25px]">
              <span>Date</span>
              <ChevronDown className="ml-auto" size={18} strokeWidth={1.1} />
              <X className="ml-[2px]" size={16} strokeWidth={1.2} />
            </div>
            <div className="flex items-center h-[24px] pl-[10px]">
              <span>Year</span>
              <X className="ml-auto" size={16} strokeWidth={1.2} />
            </div>
          </div>
        </div>
        <div className="leading-5 pl-[10px] mt-[14px] mb-[8px]">X-axis</div>
        <div className="h-[134px] border border-dashed border-[#b5b5b5] px-[3px] pt-[3px] flex flex-col gap-[2px]">
          <Chip label="Sum of Max Drawdown" />
          <Chip label="Count of Adj Close" />
          <Chip label="Count of SMA_200" />
          <Chip label="Count of SMA_50" />
        </div>
        <div className="leading-5 pl-[10px] mt-[14px] mb-[6px]">Legend</div>
        <div className="h-[34px] border border-dashed border-[#b5b5b5] bg-white flex items-center pl-[12px]">Add data fields here</div>
      </div>
      <div className="absolute right-[1px] top-[424px] w-[7px] h-[194px] rounded-[4px] bg-[#8a8886]" />
    </div>
  );
}

const Sigma = () => <span className="text-[17px] leading-none text-[#333] font-[400]">Σ</span>;
const Cal = () => (
  <svg width="16" height="15" viewBox="0 0 16 15" fill="none" stroke="#444" strokeWidth="1.2" aria-hidden="true">
    <rect x="1" y="1" width="14" height="13" rx="2" />
    <path d="M1 5h14M4 8h1M7.5 8h1M11 8h1M4 11h1M7.5 11h1" />
  </svg>
);
const Badge = ({ className }: { className: string }) => (
  <span className={`absolute w-[15px] h-[15px] rounded-full bg-[#117865] flex items-center justify-center ${className}`}>
    <Check size={9} strokeWidth={3} color="#fff" />
  </span>
);
const TableIcon = () => (
  <span className="relative flex">
    <svg width="16" height="16" viewBox="0 0 16 16" fill="none" stroke="#444" strokeWidth="1.2" aria-hidden="true">
      <rect x="1" y="1" width="14" height="14" rx="2" />
      <path d="M1 6h14M1 10h14M6 1v14M10 1v14" />
    </svg>
    <Badge className="left-[8px] top-[7px]" />
  </span>
);

function Box({ on }: { on?: boolean }) {
  return (
    <span className={`w-[15px] h-[15px] rounded-[2px] border flex items-center justify-center shrink-0 ${on ? "bg-[#117865] border-[#117865]" : "bg-[#f3f2f1] border-[#8a8886]"}`}>
      {on && <Check size={12} strokeWidth={2.6} color="#fff" />}
    </span>
  );
}

function Field({ label, on, icon, chev }: { label: string; on?: boolean; icon?: ReactNode; chev?: boolean }) {
  return (
    <div className="flex items-center h-[30px] pl-[36px] relative whitespace-nowrap">
      {chev && <ChevronRight className="absolute left-[33px]" size={16} strokeWidth={1.2} />}
      <span className="ml-[18px]"><Box on={on} /></span>
      <span className="w-[33px] flex justify-center">{icon}</span>
      <span>{label}</span>
    </div>
  );
}

function DataPane() {
  return (
    <div className="flex-1 bg-[#f3f2f1] border-l border-[#e3e1df] text-[14.2px] text-[#333]">
      <div className="flex items-center h-[50px] pl-[9px] pr-[8px]">
        <span className="text-[19px] font-semibold">Data</span>
        <ChevronsRight className="ml-auto" size={22} strokeWidth={1.3} />
      </div>
      <div className="ml-[5px] mt-[7px] w-[215px] h-[29px] bg-white border border-[#c8c6c4] rounded-[3px] flex items-center pl-[14px] gap-[9px]">
        <Search size={18} strokeWidth={1.3} />
        <span className="text-[16px] text-[#777]">Search</span>
      </div>
      <div className="mt-[13px]">
        <div className="flex items-center h-[30px] pl-[15px] gap-[6px]">
          <ChevronDown size={16} strokeWidth={1.2} />
          <TableIcon />
          <span className="-ml-[1px]">kpis_summary</span>
        </div>
        <Field label="Annualized Vol..." icon={<Sigma />} />
        <Field label="CAGR" icon={<Sigma />} />
        <Field label="end_date" icon={<Cal />} chev />
        <Field label="Max Drawdown" icon={<Sigma />} on />
        <Field label="Sharpe (ann.)" icon={<Sigma />} />
        <Field label="start_date" icon={<Cal />} chev />
        <div className="flex items-center h-[30px] pl-[15px] gap-[6px] whitespace-nowrap">
          <ChevronDown size={16} strokeWidth={1.2} />
          <TableIcon />
          <span className="-ml-[1px]">timeseries_summary</span>
        </div>
        <Field label="Adj Close" on />
        <Field label="cumulative_retu..." icon={<Sigma />} />
        <div className="flex items-center h-[30px] pl-[33px] whitespace-nowrap">
          <ChevronDown size={16} strokeWidth={1.2} />
          <span className="ml-[5px]"><Box on /></span>
          <span className="relative w-[33px] flex justify-center">
            <Cal />
            <Badge className="left-[17px] top-[6px]" />
          </span>
          <span>Date</span>
        </div>
        <div className="flex items-center h-[30px] pl-[51px] whitespace-nowrap">
          <ChevronRight size={16} strokeWidth={1.2} />
          <span className="ml-[5px]"><Box on /></span>
          <span className="relative w-[33px] flex justify-center">
            <svg width="14" height="18" viewBox="0 0 14 18" fill="none" stroke="#444" strokeWidth="1.1" aria-hidden="true">
              <path d="M1 1h5v4H1zM3.5 5v9h4M3.5 9h4M7.5 7.5h4v3h-4zM7.5 12.5h4v3h-4z" />
            </svg>
            <Badge className="left-[17px] top-[6px]" />
          </span>
          <span>Date Hierarc...</span>
        </div>
        <Field label="return" icon={<Sigma />} />
        <Field label="rolling_vol_30d" icon={<Sigma />} />
        <Field label="SMA_200" on />
        <Field label="SMA_50" on />
      </div>
    </div>
  );
}

function StatusBar() {
  return (
    <div className="flex items-center h-[30px] bg-[#f3f2f1] border-t border-[#dedcda] border-b border-b-black text-[13px] text-[#444] pl-[5px]">
      <span>Page 2 of 2</span>
      <div className="ml-auto flex items-center text-[#555]">
        <span className="w-[6px] h-[2px] bg-[#555]" />
        <div className="relative ml-[5px] w-[125px] h-px bg-[#555]">
          <span className="absolute left-[42px] -top-[6px] w-[4px] h-[13px] bg-[#555]" />
          <span className="absolute left-[62px] -top-[3px] w-px h-[7px] bg-[#555]" />
        </div>
        <Plus className="ml-[4px]" size={12} strokeWidth={2} />
        <span className="ml-[16px] text-[14px]">73%</span>
        <svg className="ml-[25px] mr-[22px]" width="20" height="18" viewBox="0 0 20 18" fill="none" aria-hidden="true">
          <rect x=".5" y=".5" width="19" height="17" stroke="#999" fill="#eee" />
          <path d="M4 7V4h4M12 4h4v3M16 11v3h-4M8 14H4v-3" stroke="#444" strokeWidth="1.2" />
        </svg>
      </div>
    </div>
  );
}

function TaskIcon({ children, dot, active, w = 55 }: { children: ReactNode; dot?: boolean; active?: boolean; w?: number }) {
  return (
    <div className="relative h-[60px] flex items-center justify-center shrink-0" style={{ width: w }}>
      {active && <span className="absolute inset-x-[3.5px] top-[6px] bottom-[6px] rounded-[4px] bg-[#e6f2f7] shadow-[0_1px_1px_rgba(0,0,0,0.1)]" />}
      <svg className="relative" width="30" height="30" viewBox="0 0 30 30" fontFamily="'Open Sans',sans-serif" aria-hidden="true">
        {children}
      </svg>
      {dot && <span className="absolute bottom-[6px] w-[6px] h-[6px] rounded-full bg-[#6f7f83]" />}
      {active && <span className="absolute bottom-[6px] w-[20px] h-[4px] rounded-full bg-[#0a78d6]" />}
    </div>
  );
}

function Taskbar() {
  return (
    <div className="flex items-center h-[60px] bg-[linear-gradient(90deg,#dbe7c0_0%,#d4e7cb_20%,#c6e6dc_42%,#c9e5e6_60%,#cfe5ec_100%)] text-[#222]">
      <div className="w-[447px] flex items-center pl-[24px]">
        <div className="relative w-[38px] h-[44px]">
          <svg className="absolute left-0 top-[6px]" width="36" height="34" viewBox="0 0 36 34" aria-hidden="true">
            <circle cx="14" cy="12" r="6" fill="#f4b13c" />
            <path d="M8 31a7 7 0 0 1-1-13 8 8 0 0 1 15-1 7 7 0 0 1 1 14z" fill="#a9c9ee" stroke="#7ea7d8" />
          </svg>
          <span className="absolute left-[14px] top-[1px] w-[21px] h-[21px] rounded-full bg-[#c42b1c] text-white text-[13px] flex items-center justify-center">5</span>
        </div>
        <div className="ml-[2px] text-[14.5px] leading-5">
          <div>18°C</div>
          <div className="text-[#555]">Mostly cloudy</div>
        </div>
      </div>
      <svg width="29" height="29" viewBox="0 0 29 29" aria-hidden="true">
        <defs>
          <linearGradient id="win" x1="0" y1="0" x2="1" y2="1">
            <stop offset="0" stopColor="#4fd4f7" />
            <stop offset="1" stopColor="#0f6fd1" />
          </linearGradient>
        </defs>
        <path d="M0 0h14v14H0zM15 0h14v14H15zM0 15h14v14H0zM15 15h14v14H15z" fill="url(#win)" />
      </svg>
      <div className="ml-[18px] w-[273px] h-[38px] rounded-full bg-[#eaf5f2] border border-[#d6e6e2] flex items-center pl-[14px] gap-[11px] text-[16px] text-[#555]">
        <Search size={20} strokeWidth={2} color="#222" />
        Search
      </div>
      <TaskIcon w={58.5}>
        <rect x="8" y="11" width="13" height="19" rx="1" fill="#222" />
        <rect x="12" y="2" width="14" height="18" rx="1" fill="#e9e9e9" />
        <rect x="8" y="11" width="13" height="9" fill="#8a8a8a" />
      </TaskIcon>
      <TaskIcon dot>
        <path d="M0 3h12l3 3v24H0z" fill="#e0a21a" />
        <rect y="7" width="30" height="23" fill="#f6cf52" />
        <rect x="10" y="18" width="19" height="10" fill="#0f6fbf" rx="1" />
      </TaskIcon>
      <TaskIcon>
        <defs>
          <linearGradient id="edg" x1="0" y1="0" x2="1" y2="1">
            <stop offset="0" stopColor="#37c87c" />
            <stop offset=".6" stopColor="#1a8fd6" />
            <stop offset="1" stopColor="#0d5fb0" />
          </linearGradient>
        </defs>
        <circle cx="15" cy="15" r="14.5" fill="url(#edg)" />
        <path d="M9 18c0-5 5-8 10-7 4 1 6 4 6 7H12c1 5 8 6 13 3-5 8-18 6-16-3z" fill="#d6f1e4" />
      </TaskIcon>
      <TaskIcon>
        <circle cx="15" cy="16" r="13" fill="#ff8a1f" />
        <path d="M26 8c3 8 0 19-11 21C6 30 1 22 2 14c3 6 10 8 14 4 2-3 0-7-4-7 4-3 10-2 14-3z" fill="#e0223c" />
        <circle cx="15" cy="16" r="6" fill="#7c3fdc" />
      </TaskIcon>
      <TaskIcon>{<g transform="scale(0.72)">{ribbonIcons.copilot}</g>}</TaskIcon>
      <TaskIcon>
        <circle cx="23" cy="8" r="4" fill="#7b83eb" />
        <rect x="17" y="13" width="12" height="13" rx="4" fill="#7b83eb" />
        <circle cx="14" cy="6" r="5" fill="#5059c9" />
        <rect x="8" y="11" width="14" height="17" rx="3" fill="#5059c9" />
        <rect x="1" y="8" width="15" height="15" rx="2" fill="#4b53bc" />
        <text x="8.5" y="20" fontSize="12" fontWeight="700" fill="#fff" textAnchor="middle">T</text>
      </TaskIcon>
      <TaskIcon>
        <path d="M10 6l12-5 7 7v15H10z" fill="#0f7ad6" />
        <path d="M22 1l7 7-10 7-9-9z" fill="#28a8ea" />
        <path d="M10 15h19v12H10z" fill="#5fc4f0" />
        <rect x="1" y="9" width="15" height="15" rx="2" fill="#0a5fb4" />
        <text x="8.5" y="21" fontSize="12" fontWeight="700" fill="#fff" textAnchor="middle">O</text>
      </TaskIcon>
      <TaskIcon>
        <circle cx="15" cy="15" r="14.5" fill="#ea4335" />
        <path d="M15 15L2 22a14.5 14.5 0 0 0 14 7.5z" fill="#34a853" />
        <path d="M15 8h13a14.5 14.5 0 0 1-12 21.5L15 15z" fill="#fbbc05" />
        <path d="M16 29.5L24 20l-9-5z" fill="#34a853" />
        <circle cx="15" cy="15" r="7" fill="#fff" />
        <circle cx="15" cy="15" r="5.5" fill="#4285f4" />
      </TaskIcon>
      <TaskIcon dot>
        <circle cx="13" cy="17" r="13" fill="#ea4335" />
        <path d="M13 17L1 23a13 13 0 0 0 12 7z" fill="#34a853" />
        <path d="M13 11h12a13 13 0 0 1-12 19z" fill="#fbbc05" />
        <circle cx="13" cy="17" r="6.5" fill="#fff" />
        <circle cx="13" cy="17" r="5" fill="#4285f4" />
        <circle cx="22" cy="10" r="9" fill="#6c9a38" />
        <text x="22" y="14" fontSize="11" fill="#fff" textAnchor="middle">A</text>
      </TaskIcon>
      <TaskIcon dot>
        <rect y="1" width="30" height="28" rx="2" fill="#333" />
        <rect y="1" width="30" height="6" fill="#888" />
        <path d="M5 11l5 5-5 5M13 22h8" stroke="#fff" fill="none" strokeWidth="1.5" />
      </TaskIcon>
      <TaskIcon dot>
        <rect x="6" y="2" width="20" height="26" rx="1" fill="#55bfe4" />
        <rect x="6" y="26" width="20" height="4" fill="#8a4a1a" />
        <path d="M10 10h12M10 15h12M10 20h12" stroke="#0b4f7a" strokeWidth="2" />
        <path d="M9 1v3M13 1v3M17 1v3M21 1v3" stroke="#0b4f7a" strokeWidth="1.5" />
      </TaskIcon>
      <TaskIcon dot>
        <path d="M1 4l16-3v28L1 26z" fill="#107c41" />
        <rect x="17" y="5" width="12" height="20" fill="#fff" stroke="#107c41" />
        <path d="M20 10h6M20 15h6M20 20h6" stroke="#107c41" strokeWidth="1.5" />
        <text x="9" y="20" fontSize="13" fontWeight="700" fill="#fff" textAnchor="middle">X</text>
      </TaskIcon>
      <TaskIcon active>
        <rect width="30" height="30" fill="#0f6fc6" />
        <rect x="18" y="0" width="12" height="30" fill="#d79a12" />
        <rect x="10" y="9" width="10" height="21" fill="#f2c811" />
        <rect x="3" y="17" width="9" height="13" fill="#fbe36b" />
      </TaskIcon>
      <div className="ml-[92px] w-[30px] flex justify-center">
        <ChevronUp size={17} strokeWidth={1.8} />
      </div>
      <svg className="ml-[9px] w-[30px]" width="24" height="24" viewBox="0 0 24 24" aria-hidden="true">
        <path d="M6 19a5 5 0 0 1 0-10 6 6 0 0 1 11 0v10z" fill="#555" />
        <circle cx="17" cy="17" r="6" fill="#0f6fc6" />
        <rect x="16" y="15" width="2" height="6" fill="#fff" />
        <rect x="16" y="12.5" width="2" height="2" fill="#fff" />
      </svg>
      <div className="ml-[14px] w-[40px] text-center text-[14px] leading-5">
        <div>ENG</div>
        <div>IN</div>
      </div>
      <svg className="ml-[14px]" width="24" height="24" viewBox="0 0 24 24" fill="none" stroke="#222" strokeWidth="1.4" aria-hidden="true">
        <path d="M2 9c6-6 14-6 20 0M5 13c4-4 10-4 14 0M8 16c2-2 6-2 8 0" />
        <circle cx="12" cy="19" r="1" fill="#222" />
      </svg>
      <svg className="ml-[6px]" width="24" height="24" viewBox="0 0 24 24" fill="none" stroke="#222" strokeWidth="1.3" aria-hidden="true">
        <path d="M3 9h4l6-5v16l-6-5H3zM16 8c2 2 2 6 0 8M19 5c3 4 3 10 0 14" />
      </svg>
      <svg className="ml-[6px]" width="24" height="24" viewBox="0 0 24 24" aria-hidden="true">
        <rect x="3" y="7" width="16" height="11" rx="2" fill="#222" />
        <rect x="19" y="10" width="2" height="5" fill="#222" />
        <path d="M11 3L7 10h4l-2 5" stroke="#e8f2f2" strokeWidth="1.2" fill="none" />
      </svg>
      <div className="flex-1 text-right pr-[24px] text-[14.5px] leading-5 whitespace-nowrap">
        <div>23:10</div>
        <div>19/09/2025</div>
      </div>
    </div>
  );
}

export default function App() {
  return (
    <div className="w-[1920px] h-[1080px] overflow-hidden flex flex-col bg-white [font-family:'Open_Sans',sans-serif]">
      <TitleBar />
      <TabRow />
      <Ribbon />
      <div className="flex h-[790px]">
        <LeftRail />
        <div className="w-[1418px] shrink-0 flex flex-col">
          <div className="flex h-[746px]">
            <Canvas />
            <FiltersPane />
          </div>
          <PageTabs />
        </div>
        <VizPane />
        <DataPane />
      </div>
      <StatusBar />
      <Taskbar />
    </div>
  );
}
